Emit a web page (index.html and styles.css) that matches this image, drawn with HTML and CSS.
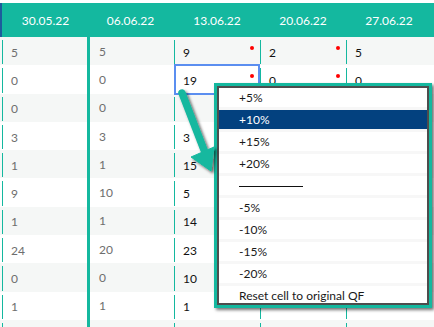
FILE: index.html
```html
<!DOCTYPE html>
<html>
<head>
<meta charset="utf-8">
<link rel="stylesheet" href="styles.css">
</head>
<body>
<div class="page">
  <div class="row head">
    <div class="h first">30.05.22</div>
    <div class="h">06.06.22</div>
    <div class="h">13.06.22</div>
    <div class="h">20.06.22</div>
    <div class="h">27.06.22</div>
    <div class="h"></div>
  </div>

  <div class="row odd">
    <div class="c first"><div class="v muted">5</div></div>
    <div class="c thick"><div class="v muted">5</div></div>
    <div class="c"><div class="v dark">9</div><span class="dot"></span></div>
    <div class="c"><div class="v dark">2</div><span class="dot"></span></div>
    <div class="c"><div class="v dark">5</div></div>
    <div class="c end"></div>
  </div>
  <div class="row">
    <div class="c first"><div class="v muted">0</div></div>
    <div class="c thick"><div class="v muted">0</div></div>
    <div class="c"><div class="v dark">19</div><span class="dot"></span><span class="focus"></span></div>
    <div class="c"><div class="v dark">0</div><span class="dot"></span></div>
    <div class="c"><div class="v dark">0</div></div>
    <div class="c end"></div>
  </div>
  <div class="row odd">
    <div class="c first"><div class="v muted">0</div></div>
    <div class="c thick"><div class="v muted">0</div></div>
    <div class="c"><div class="v dark"></div><span class="dot"></span></div>
    <div class="c"><div class="v dark">0</div><span class="dot"></span></div>
    <div class="c"><div class="v dark">0</div></div>
    <div class="c end"></div>
  </div>
  <div class="row">
    <div class="c first"><div class="v muted">3</div></div>
    <div class="c thick"><div class="v muted">3</div></div>
    <div class="c"><div class="v dark">3</div><span class="dot"></span></div>
    <div class="c"><div class="v dark">3</div><span class="dot"></span></div>
    <div class="c"><div class="v dark">3</div></div>
    <div class="c end"></div>
  </div>
  <div class="row odd">
    <div class="c first"><div class="v muted">1</div></div>
    <div class="c thick"><div class="v muted">1</div></div>
    <div class="c"><div class="v dark">15</div><span class="dot"></span></div>
    <div class="c"><div class="v dark">1</div><span class="dot"></span></div>
    <div class="c"><div class="v dark">1</div></div>
    <div class="c end"></div>
  </div>
  <div class="row">
    <div class="c first"><div class="v muted">9</div></div>
    <div class="c thick"><div class="v muted">10</div></div>
    <div class="c"><div class="v dark">5</div><span class="dot"></span></div>
    <div class="c"><div class="v dark">5</div><span class="dot"></span></div>
    <div class="c"><div class="v dark">5</div></div>
    <div class="c end"></div>
  </div>
  <div class="row odd">
    <div class="c first"><div class="v muted">1</div></div>
    <div class="c thick"><div class="v muted">1</div></div>
    <div class="c"><div class="v dark">14</div><span class="dot"></span></div>
    <div class="c"><div class="v dark">1</div><span class="dot"></span></div>
    <div class="c"><div class="v dark">1</div></div>
    <div class="c end"></div>
  </div>
  <div class="row">
    <div class="c first"><div class="v muted">24</div></div>
    <div class="c thick"><div class="v muted">20</div></div>
    <div class="c"><div class="v dark">23</div><span class="dot"></span></div>
    <div class="c"><div class="v dark">22</div><span class="dot"></span></div>
    <div class="c"><div class="v dark">20</div></div>
    <div class="c end"></div>
  </div>
  <div class="row odd">
    <div class="c first"><div class="v muted">0</div></div>
    <div class="c thick"><div class="v muted">0</div></div>
    <div class="c"><div class="v dark">10</div><span class="dot"></span></div>
    <div class="c"><div class="v dark">0</div><span class="dot"></span></div>
    <div class="c"><div class="v dark">0</div></div>
    <div class="c end"></div>
  </div>
  <div class="row">
    <div class="c first"><div class="v muted">1</div></div>
    <div class="c thick"><div class="v muted">1</div></div>
    <div class="c"><div class="v dark">1</div><span class="dot"></span></div>
    <div class="c"><div class="v dark"></div><span class="dot"></span></div>
    <div class="c"><div class="v dark"></div></div>
    <div class="c end"></div>
  </div>
  <div class="row odd">
    <div class="c first"><div class="v muted"></div></div>
    <div class="c thick"><div class="v muted"></div></div>
    <div class="c"><div class="v dark"></div><span class="dot"></span></div>
    <div class="c"><div class="v dark"></div><span class="dot"></span></div>
    <div class="c"><div class="v dark"></div></div>
    <div class="c end"></div>
  </div>

  <div class="annot">
    <div class="menu">
      <div class="item">+5%</div>
      <div class="item active">+10%</div>
      <div class="item">+15%</div>
      <div class="item">+20%</div>
      <div class="item sep"><span class="rule"></span></div>
      <div class="item">-5%</div>
      <div class="item">-10%</div>
      <div class="item">-15%</div>
      <div class="item">-20%</div>
      <div class="item">Reset cell to original QF</div>
    </div>
  </div>

  <svg class="arrow" width="434" height="327" viewBox="0 0 434 327">
    <defs>
      <filter id="sh" x="-50%" y="-50%" width="200%" height="200%">
        <feDropShadow dx="2" dy="2" stdDeviation="1.5" flood-color="#000" flood-opacity="0.6"/>
      </filter>
    </defs>
    <g filter="url(#sh)" fill="#14b89f" stroke="#14b89f">
      <line x1="182" y1="93" x2="204" y2="150" stroke-width="7.5" stroke-linecap="round"/>
      <polygon points="191,157 214,147 211,171" stroke-width="1" stroke-linejoin="round"/>
    </g>
  </svg>
</div>
</body>
</html>
```

FILE: styles.css
```css
* { box-sizing: border-box; }

body {
  margin: 0;
  width: 434px;
  height: 327px;
  overflow: hidden;
  background: #fff;
  font-family: Lato, "Noto Sans", sans-serif;
  font-size: 12px;
}

.page {
  position: relative;
  height: 327px;
  overflow: hidden;
  padding-top: 3px;
}

.row {
  display: grid;
  grid-template-columns: 87px 87px 86px 86px 86px 2px;
  height: 28.3px;
  background: #fff;
}

.row.odd { background: #f5f7f6; }

.head {
  height: 34px;
  background: #14b89f;
  color: #fff;
}

.head .h {
  display: flex;
  align-items: center;
  justify-content: center;
}

.head .h.first {
  border-left: 2px solid #1c5d9c;
  padding-left: 2px;
}

.c {
  position: relative;
  padding: 3px 0 1px;
}

.c .v {
  height: 100%;
  border-left: 1px solid #14b89f;
  padding-left: 8px;
  display: flex;
  align-items: center;
}

.c.first { padding-left: 2px; }

.c.thick {
  padding: 0;
  border-left: 3px solid #14b89f;
}

.c.thick .v {
  border-left: 0;
  padding-left: 9px;
}

.muted { color: #6e6e6e; }
.dark { color: #111; }

.dot {
  position: absolute;
  right: 6px;
  top: 9px;
  width: 4px;
  height: 4px;
  border-radius: 50%;
  background: #f00;
}

.focus {
  position: absolute;
  left: 0;
  right: 0;
  top: -1px;
  bottom: -1px;
  border: 2px solid #5b8ef0;
}

.annot {
  position: absolute;
  left: 214px;
  top: 83px;
  width: 218px;
  height: 225px;
  border: 3px solid #14b89f;
  box-shadow: 2px 2px 3px rgba(0, 0, 0, 0.55);
}

.menu {
  height: 100%;
  background: #fff;
  border: 2px solid #4d4d4d;
  overflow: hidden;
}

.item {
  height: 22px;
  line-height: 19px;
  padding-left: 20px;
  border-bottom: 3px solid #f7f7f7;
  color: #1a1a1a;
  white-space: nowrap;
}

.item.active {
  background: #03417f;
  color: #fff;
}

.item.sep {
  display: flex;
  align-items: center;
}

.rule {
  display: block;
  width: 64px;
  height: 1px;
  background: #111;
  margin-top: 2px;
}

.arrow {
  position: absolute;
  left: 0;
  top: 0;
  pointer-events: none;
}
```
